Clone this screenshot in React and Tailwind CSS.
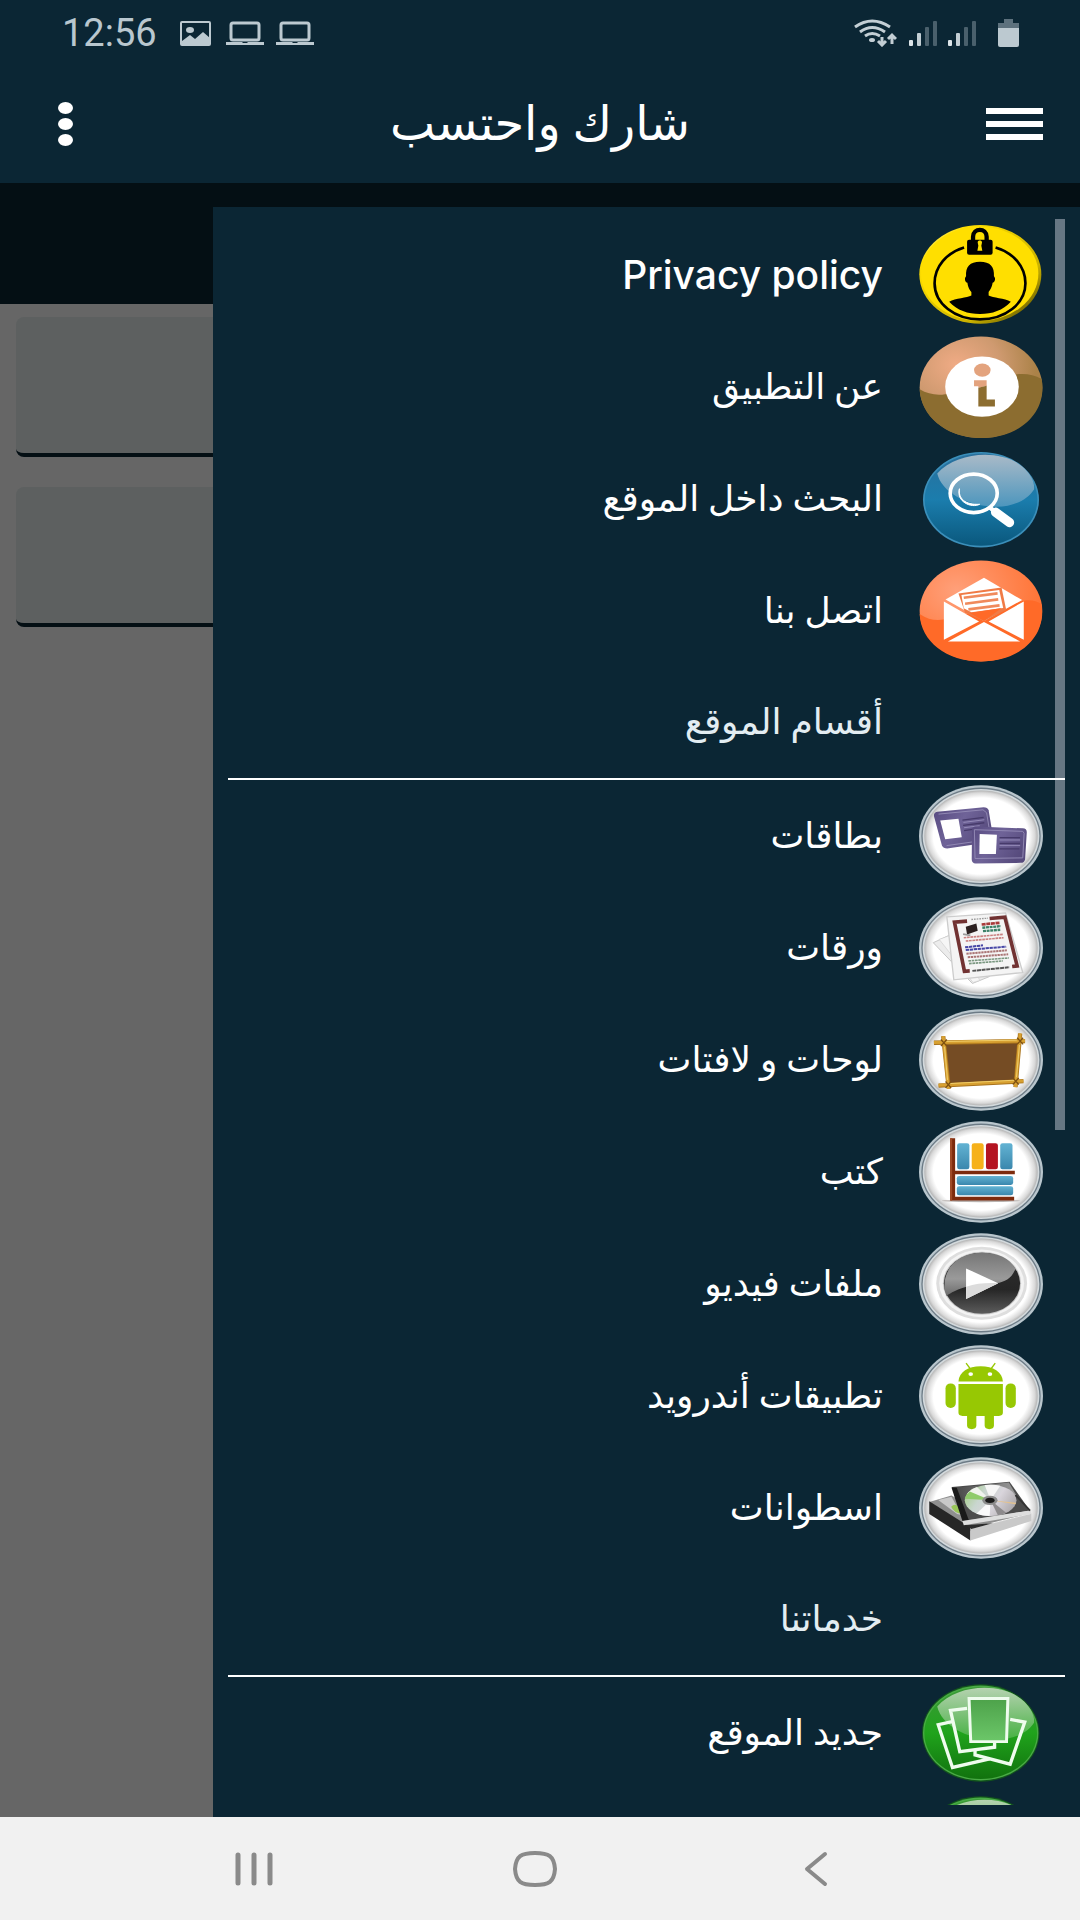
import React from "react";

const iconClass = "h-[102px] w-[124px] shrink-0";

/* Silver-rimmed white disc shared by the section icons. */
function Plate({ cy }) {
  return (
    <>
      <defs>
        <radialGradient id={`plate${cy}`}>
          <stop offset="0.84" stopColor="#ffffff" />
          <stop offset="0.95" stopColor="#d9d9d9" />
          <stop offset="1" stopColor="#b4b4b4" />
        </radialGradient>
      </defs>
      <ellipse cx="304" cy={cy} rx="187" ry="153" fill="#b9c6cd" />
      <ellipse cx="304" cy={cy} rx="180" ry="146" fill="#6c7b86" />
      <ellipse cx="304" cy={cy} rx="176" ry="142" fill="#d3d9dc" />
      <ellipse cx="304" cy={cy} rx="171" ry="137" fill={`url(#plate${cy})`} />
    </>
  );
}

function PrivacyIcon() {
  return (
    <svg className={iconClass} viewBox="117 72 374 306" aria-hidden="true">
      <defs>
        <linearGradient id="pv" x1="0" y1="0" x2="1" y2="1">
          <stop offset="0" stopColor="#fff9c0" />
          <stop offset="0.2" stopColor="#ffdf00" />
          <stop offset="0.7" stopColor="#c9b000" />
          <stop offset="1" stopColor="#3d3800" />
        </linearGradient>
      </defs>
      <ellipse cx="302" cy="223" rx="184" ry="149" fill="url(#pv)" />
      <ellipse cx="300" cy="221" rx="177" ry="142" fill="#ffdf00" />
      <path d="M253 142 C200 158 164 200 164 250 C164 312 225 359 301 359 C377 359 438 312 438 250 C438 200 402 158 348 142" fill="none" stroke="#000" strokeWidth="8" />
      <path d="M280 122 V110 C280 82 321 82 321 110 V122" fill="none" stroke="#000" strokeWidth="13" />
      <rect x="262" y="119" width="77" height="45" rx="6" />
      <path d="M294 127 C294 119 307 119 307 127 L305 137 L308 152 H293 L296 137 Z" fill="#ffdf00" />
      <path d="M301 185 C332 185 345 200 343 229 C350 236 345 248 339 248 C337 263 331 270 327 276 V287 C340 295 375 294 394 306 C370 332 338 343 301 343 C264 343 232 332 208 306 C227 294 262 295 275 287 V276 C270 270 265 263 263 248 C257 248 252 236 259 229 C257 200 270 185 301 185 Z" />
    </svg>
  );
}

function InfoIcon() {
  return (
    <svg className={iconClass} viewBox="117 408 374 306" aria-hidden="true">
      <defs>
        <radialGradient id="inf" cx="0.3" cy="0.28" r="0.65">
          <stop offset="0" stopColor="#f0ab85" />
          <stop offset="0.55" stopColor="#cf9a70" />
          <stop offset="1" stopColor="#ab8248" />
        </radialGradient>
      </defs>
      <ellipse cx="304" cy="562" rx="185" ry="153" fill="url(#inf)" />
      <path d="M119 568 C150 587 185 588 215 578 L400 525 C430 518 460 522 487 537 C505 638 421 715 304 715 C200 715 122 650 119 568 Z" fill="#8c6d30" />
      <ellipse cx="307" cy="560" rx="111" ry="91" fill="#fff" />
      <ellipse cx="308" cy="510" rx="25" ry="20" fill="#e3a37e" />
      <path d="M283 541 H321 V558 L296 563 V559 H283 Z" fill="#e3a37e" />
      <path d="M296 563 L321 557 V599 H346 V620 H296 Z" fill="#8c6d30" />
    </svg>
  );
}

function SearchIcon() {
  return (
    <svg className={iconClass} viewBox="117 54 374 306" aria-hidden="true">
      <defs>
        <linearGradient id="sb" x1="0" y1="0" x2="0" y2="1">
          <stop offset="0" stopColor="#2a6f9c" />
          <stop offset="0.5" stopColor="#1b7dad" />
          <stop offset="1" stopColor="#0a587d" />
        </linearGradient>
        <linearGradient id="sg" x1="0" y1="0" x2="0" y2="1">
          <stop offset="0" stopColor="#a9bac8" />
          <stop offset="1" stopColor="#4d96bd" />
        </linearGradient>
      </defs>
      <ellipse cx="304" cy="209" rx="175" ry="144" fill="#3b8fba" />
      <ellipse cx="304" cy="209" rx="170" ry="139" fill="url(#sb)" />
      <path d="M172 130 C235 60 375 55 435 115 C460 140 466 162 464 178 C440 215 390 232 345 230 C260 228 185 185 172 130 Z" fill="url(#sg)" />
      <ellipse cx="282" cy="190" rx="71" ry="58" fill="none" stroke="#fff" strokeWidth="11" />
      <path d="M239 176 C235 205 255 225 300 223 C275 236 228 215 239 176 Z" fill="#fff" stroke="#fff" strokeWidth="3" />
      <path d="M331 233 L341 241" stroke="#fff" strokeWidth="13" />
      <path d="M348 247 L390 278" stroke="#fff" strokeWidth="28" strokeLinecap="round" />
    </svg>
  );
}

function MailIcon() {
  return (
    <svg className={iconClass} viewBox="117 390 374 306" aria-hidden="true">
      <defs>
        <radialGradient id="ml" cx="0.3" cy="0.3" r="0.7">
          <stop offset="0" stopColor="#ffa07a" />
          <stop offset="1" stopColor="#ff7436" />
        </radialGradient>
      </defs>
      <ellipse cx="304" cy="543" rx="185" ry="152" fill="url(#ml)" />
      <path d="M119 552 C145 570 170 573 195 568 L433 512 C455 508 472 513 486 522 C503 620 421 695 304 695 C200 695 122 635 119 552 Z" fill="#ff6a28" />
      <path d="M197 508 L313 443 L428 510 L313 573 Z" fill="#fff" />
      <path d="M236 490 L366 472 L380 540 L313 573 L256 548 Z" fill="#f07b46" />
      <path d="M245 495 L359 480 L371 534 L275 547 L252 535 Z" fill="#fff" />
      <path d="M252 503 L354 490 M256 521 L356 508 M266 538 L360 526" stroke="#f08a5c" strokeWidth="8" />
      <path d="M270 549 L366 534 L313 573 Z" fill="#ff6a28" />
      <path d="M192 514 L298 575 L192 630 Z M433 514 L327 575 L433 630 Z M204 635 L313 576 L422 635 Z" fill="#fff" />
    </svg>
  );
}

function CardsIcon() {
  return (
    <svg className={iconClass} viewBox="117 75 374 306" aria-hidden="true">
      <defs>
        <linearGradient id="cd" x1="0" y1="0" x2="1" y2="0.5">
          <stop offset="0" stopColor="#574a80" />
          <stop offset="0.5" stopColor="#6f6398" />
          <stop offset="1" stopColor="#574b7d" />
        </linearGradient>
      </defs>
      <Plate cy={228} />
      <path d="M172 155 L312 141 Q324 141 327 150 L341 235 Q341 245 330 247 L202 266 Q190 266 186 256 L162 168 Q161 157 172 155 Z" fill="url(#cd)" />
      <path d="M176 162 L310 149 L321 158 L334 238 L200 257" fill="none" stroke="#9188b3" strokeWidth="3" />
      <path d="M181 181 L236 176 L246 232 L196 238 Z" fill="#fff" />
      <path d="M248 180 L312 172 M250 196 L314 188 M253 212 L300 205" stroke="#463a6a" strokeWidth="4" />
      <path d="M251 187 L314 179 M253 203 L300 197" stroke="#958bb8" strokeWidth="3" />
      <path d="M288 199 L430 205 Q443 206 442 218 L437 298 Q435 309 424 309 L288 311 Q276 310 276 298 L277 210 Q278 199 288 199 Z" fill="url(#cd)" />
      <path d="M284 209 L430 214 L434 220 L430 294 L286 296 Z" fill="none" stroke="#9188b3" strokeWidth="3" />
      <path d="M300 222 L352 224 L349 282 L299 282 Z" fill="#fff" />
      <path d="M360 233 H422 M360 250 H422 M359 267 H420" stroke="#463a6a" strokeWidth="4" />
      <path d="M360 240 H422 M360 257 H422" stroke="#958bb8" strokeWidth="3" />
    </svg>
  );
}

function PapersIcon() {
  return (
    <svg className={iconClass} viewBox="117 411 374 306" aria-hidden="true">
      <Plate cy={564} />
      <path d="M160 548 L212 524 L330 650 L278 671 Z" fill="#ececec" stroke="#c6c6c6" strokeWidth="3" />
      <path d="M178 538 L240 515 L300 662 L280 668 Z" fill="#f6f6f6" stroke="#cfcfcf" strokeWidth="2" />
      <path d="M201 470 L378 458 L430 638 L222 660 Z" fill="#f4f4f4" stroke="#cdcdcd" strokeWidth="4" />
      <path d="M262 483 L224 486 L254 634 L270 633 M330 475 L376 471 L413 618 L398 620" fill="none" stroke="#713232" strokeWidth="11" />
      <path d="M275 478 L325 474" stroke="#9a9a9a" strokeWidth="4" strokeDasharray="5 3" />
      <path d="M258 500 L290 490 L294 512 L262 523 Z" fill="#2b2020" />
      <path d="M250 522 L272 526" stroke="#999" strokeWidth="5" />
      <path d="M306 493 L360 488" stroke="#a83a3a" strokeWidth="8" strokeDasharray="12 2" />
      <path d="M308 503 L364 498 M310 513 L362 509" stroke="#3c8068" strokeWidth="7" strokeDasharray="9 2" />
      <path d="M252 533 L370 523 M258 543 L372 533" stroke="#c98080" strokeWidth="5" strokeDasharray="8 2" />
      <path d="M256 562 L310 556 M258 570 L380 560" stroke="#4747a6" strokeWidth="6" strokeDasharray="10 2" />
      <path d="M260 581 L382 571 M264 592 L386 583" stroke="#a97474" strokeWidth="6" strokeDasharray="7 2" />
      <path d="M266 603 L388 594 M268 611 L370 603" stroke="#7a9780" strokeWidth="5" strokeDasharray="8 2" />
      <path d="M278 633 L390 622" stroke="#555" strokeWidth="6" strokeDasharray="12 2" />
    </svg>
  );
}

function BoardIcon() {
  return (
    <svg className={iconClass} viewBox="117 57 374 306" aria-hidden="true">
      <Plate cy={210} />
      <path d="M195 158 L422 152 L412 276 L208 284 Z" fill="#754c24" />
      <g stroke="#a8721c" strokeWidth="13" fill="none">
        <path d="M162 158 L437 153 M176 287 L432 274 M190 138 L207 297 M422 130 L408 292" />
      </g>
      <g stroke="#d7a031" strokeWidth="9" fill="none">
        <path d="M162 157 L437 152 M176 286 L432 273 M190 138 L206 297 M422 130 L408 292" />
      </g>
      <path d="M200 154 L412 150 M210 281 L405 271 M194 170 L203 270 M420 165 L411 262" stroke="#f1cf6b" strokeWidth="3" />
      <g stroke="#7d5010" strokeWidth="4">
        <path d="M183 148 L201 168 M201 148 L183 168 M413 143 L431 163 M431 143 L413 163 M197 275 L214 294 M214 275 L197 294 M400 264 L418 284 M418 264 L400 284" />
      </g>
    </svg>
  );
}

function BooksIcon() {
  return (
    <svg className={iconClass} viewBox="117 393 374 306" aria-hidden="true">
      <defs>
        <linearGradient id="bk" x1="0" y1="0" x2="0" y2="1">
          <stop offset="0" stopColor="#63b3d3" />
          <stop offset="1" stopColor="#3a87ad" />
        </linearGradient>
      </defs>
      <Plate cy={546} />
      <ellipse cx="304" cy="633" rx="118" ry="4" fill="#b9b3b0" />
      <path d="M211 444 H226 V542 H406 V553 H226 V621 H404 V632 H211 Z" fill="#7d2b0d" />
      <path d="M211 444 H217 V632 H211 Z" fill="#a04a26" />
      <rect x="232" y="459" width="37" height="79" rx="7" fill="url(#bk)" />
      <rect x="276" y="459" width="36" height="79" rx="7" fill="#f6b11a" />
      <rect x="319" y="459" width="36" height="79" rx="7" fill="#b41421" />
      <rect x="362" y="459" width="37" height="79" rx="7" fill="url(#bk)" />
      <rect x="231" y="558" width="170" height="27" rx="7" fill="url(#bk)" />
      <rect x="231" y="589" width="170" height="27" rx="7" fill="url(#bk)" />
    </svg>
  );
}

function VideoIcon() {
  return (
    <svg className={iconClass} viewBox="117 39 374 306" aria-hidden="true">
      <defs>
        <linearGradient id="vb" x1="0" y1="0" x2="0" y2="1">
          <stop offset="0" stopColor="#2e2e2e" />
          <stop offset="0.6" stopColor="#262626" />
          <stop offset="1" stopColor="#5c5c5c" />
        </linearGradient>
        <linearGradient id="vg" x1="0" y1="0" x2="0" y2="1">
          <stop offset="0" stopColor="#767676" />
          <stop offset="0.6" stopColor="#9a9a9a" />
          <stop offset="1" stopColor="#6b6b6b" />
        </linearGradient>
      </defs>
      <Plate cy={192} />
      <ellipse cx="306" cy="190" rx="137" ry="110" fill="#dedede" />
      <ellipse cx="306" cy="190" rx="128" ry="102" fill="#f3f3f3" />
      <ellipse cx="307" cy="190" rx="118" ry="95" fill="#c9c9c9" />
      <ellipse cx="307" cy="190" rx="115" ry="92" fill="url(#vb)" />
      <path d="M194 210 C188 140 240 98 307 98 C355 98 390 115 408 146 C385 205 330 185 270 198 C235 206 210 220 200 228 Z" fill="url(#vg)" />
      <path d="M259 145 L356 190 L259 237 Z" fill="#fff" />
      <path d="M259 200 C290 190 325 188 356 190 L259 237 Z" fill="#dcdcdc" />
    </svg>
  );
}

function AndroidIcon() {
  return (
    <svg className={iconClass} viewBox="117 375 374 306" aria-hidden="true">
      <Plate cy={528} />
      <g fill="#97c803">
        <path d="M236 484 C238 455 265 438 303 438 C341 438 368 455 370 484 Z" />
        <path d="M236 492 H370 V578 Q370 588 358 588 H343 V618 Q342 628 329 628 Q316 628 315 618 V588 H290 V618 Q289 628 276 628 Q263 628 262 618 V588 H248 Q236 588 236 578 Z" />
        <rect x="197" y="490" width="31" height="74" rx="15" />
        <rect x="378" y="490" width="31" height="74" rx="15" />
      </g>
      <path d="M259 429 L271 445 M347 429 L335 445" stroke="#97c803" strokeWidth="4" />
      <ellipse cx="273" cy="462" rx="7" ry="6" fill="#fff" />
      <ellipse cx="331" cy="462" rx="7" ry="6" fill="#fff" />
    </svg>
  );
}

function DiscsIcon() {
  return (
    <svg className={iconClass} viewBox="117 51 374 306" aria-hidden="true">
      <defs>
        <linearGradient id="dc" x1="0" y1="0.3" x2="1" y2="0.7">
          <stop offset="0" stopColor="#a9cf8e" />
          <stop offset="0.3" stopColor="#c9d6cf" />
          <stop offset="0.6" stopColor="#d9d5dc" />
          <stop offset="1" stopColor="#aaa6a8" />
        </linearGradient>
        <linearGradient id="cv" x1="0" y1="0" x2="1" y2="0">
          <stop offset="0" stopColor="#4a4a4a" />
          <stop offset="1" stopColor="#9a9a9a" />
        </linearGradient>
      </defs>
      <Plate cy={204} />
      <path d="M148 186 L215 166 L300 215 L455 222 L275 275 Z" fill="#8f8f8f" />
      <path d="M175 180 L215 170 L245 225 L232 222 Z" fill="#c9c9c9" />
      <path d="M214 200 Q225 188 236 200 L245 222 Q222 218 214 200 Z" fill="#9ac65a" />
      <path d="M148 184 L272 262 V302 L148 222 Z" fill="#262626" />
      <path d="M272 266 L456 220 V243 L272 302 Z" fill="#c9c9c9" />
      <path d="M272 266 L456 220" stroke="#eee" strokeWidth="3" />
      <path d="M255 256 L340 250 L275 267 Z" fill="#2b2b2b" />
      <path d="M216 141 L390 125 L452 212 L250 243 Z" fill="#4c4c4c" />
      <path d="M230 143 L388 127 L410 165 L260 190 Z" fill="url(#cv)" />
      <path d="M215 142 L231 143 L267 240 L248 243 Z" fill="#191919" />
      <ellipse cx="333" cy="181" rx="78" ry="47" fill="url(#dc)" />
      <path d="M333 181 L262 161 A78 47 0 0 1 292 141 Z" fill="#f0f3ee" />
      <path d="M333 181 L255 176 A78 47 0 0 1 270 154 Z" fill="#8fcb6b" />
      <path d="M333 181 L315 135 A78 47 0 0 1 362 137 Z" fill="#f7f7f7" />
      <path d="M333 181 L290 221 A78 47 0 0 0 330 228 Z" fill="#fafafa" />
      <path d="M333 181 L355 226 A78 47 0 0 0 380 218 Z" fill="#8d8a8c" />
      <path d="M333 181 L410 188 L408 193 Z" fill="#e5c38d" />
      <ellipse cx="331" cy="181" rx="23" ry="14" fill="#8b8b8b" />
      <ellipse cx="331" cy="181" rx="14" ry="8" fill="#1b1b1b" />
      <path d="M248 243 L455 211 L456 222 L252 256 Z" fill="#dedede" />
      <path d="M408 165 L452 212" stroke="#333" strokeWidth="5" />
    </svg>
  );
}

function PhotosIcon({ id }) {
  return (
    <svg className={iconClass} viewBox="117 93 374 306" aria-hidden="true">
      <defs>
        <linearGradient id={`${id}b`} x1="0" y1="0" x2="0" y2="1">
          <stop offset="0" stopColor="#3c9a38" />
          <stop offset="0.5" stopColor="#20a31c" />
          <stop offset="1" stopColor="#11720e" />
        </linearGradient>
        <linearGradient id={`${id}g`} x1="0" y1="0" x2="0" y2="1">
          <stop offset="0" stopColor="#b5d2b0" />
          <stop offset="1" stopColor="#46b142" />
        </linearGradient>
        <linearGradient id={`${id}p`} x1="0" y1="0" x2="0" y2="1">
          <stop offset="0" stopColor="#4da24a" />
          <stop offset="1" stopColor="#6cc769" />
        </linearGradient>
      </defs>
      <ellipse cx="303" cy="246" rx="177" ry="147" fill="#12541c" />
      <ellipse cx="303" cy="246" rx="174" ry="143" fill="#49ab45" />
      <ellipse cx="303" cy="246" rx="170" ry="139" fill={`url(#${id}b)`} />
      <path d="M172 166 C235 95 375 92 435 152 C458 176 466 198 464 215 C440 252 390 268 345 266 C260 265 185 222 172 166 Z" fill={`url(#${id}g)`} />
      <g stroke="#effcee" strokeWidth="10" fill="none">
        <path d="M217 212 L175 221 L218 350 L330 324" />
        <path d="M392 205 L436 213 L392 340 L286 312 V300" />
        <path d="M262 172 L212 178 L240 302 L345 289 V276" />
      </g>
      <path d="M268 142 H385 L381 272 H273 Z" fill={`url(#${id}p)`} stroke="#effcee" strokeWidth="9" />
    </svg>
  );
}

const items = [
  { label: "Privacy policy", Icon: PrivacyIcon, latin: true },
  { label: "عن التطبيق", Icon: InfoIcon },
  { label: "البحث داخل الموقع", Icon: SearchIcon },
  { label: "اتصل بنا", Icon: MailIcon },
  { label: "أقسام الموقع" },
  { label: "بطاقات", Icon: CardsIcon },
  { label: "ورقات", Icon: PapersIcon },
  { label: "لوحات و لافتات", Icon: BoardIcon },
  { label: "كتب", Icon: BooksIcon },
  { label: "ملفات فيديو", Icon: VideoIcon },
  { label: "تطبيقات أندرويد", Icon: AndroidIcon },
  { label: "اسطوانات", Icon: DiscsIcon },
  { label: "خدماتنا" },
  { label: "جديد الموقع", Icon: PhotosIcon },
];

function Laptop() {
  return (
    <svg className="h-6 w-[38px]" viewBox="0 0 38 24" aria-hidden="true">
      <rect x="5" y="2" width="28" height="17" rx="2" fill="none" stroke="#bcc9d0" strokeWidth="3" />
      <path d="M0 21 H16 L17 22 H21 L22 21 H38 V24 H0 Z" fill="#bcc9d0" />
    </svg>
  );
}

function Signal() {
  return (
    <svg className="h-[26px] w-7" viewBox="0 0 28 26" aria-hidden="true">
      <rect x="0" y="20" width="4" height="6" rx="1" fill="#dde5e9" />
      <rect x="8" y="13" width="4" height="13" rx="1" fill="#c3ced4" />
      <rect x="16" y="7" width="4" height="19" rx="1" fill="#4a606c" />
      <rect x="24" y="1" width="4" height="25" rx="1" fill="#4a606c" />
    </svg>
  );
}

function StatusBar() {
  return (
    <div className="flex h-[66px] items-center justify-between pl-[62px] pr-[61px]">
      <div className="flex items-center">
        <span className="w-[118px] text-[38px] leading-[44px] text-[#b9c7cf]">12:56</span>
        <svg className="mr-[15px] h-[25px] w-[31px]" viewBox="0 0 31 25" aria-hidden="true">
          <rect x="1" y="1" width="29" height="23" rx="1" fill="none" stroke="#bcc9d0" strokeWidth="2" />
          <ellipse cx="10" cy="9" rx="4" ry="3" fill="#bcc9d0" />
          <path d="M2 20 L10 14 L15 18 L23 11 L30 17 V24 H2 Z" fill="#bcc9d0" />
        </svg>
        <div className="flex gap-3">
          <Laptop />
          <Laptop />
        </div>
      </div>
      <div className="flex items-center">
        <svg className="mr-3 h-7 w-[43px]" viewBox="0 0 43 28" fill="none" stroke="#c3ced4" strokeWidth="3" aria-hidden="true">
          <path d="M1 8 Q18 -4 36 8 M6 13 Q18 4 31 13 M11 17 Q18 12 26 17" />
          <ellipse cx="18" cy="21" rx="3" ry="2" fill="#c3ced4" stroke="none" />
          <path d="M28 18 V26 M24 22 L28 26 L32 22 M38 25 V17 M34 20 L38 16 L42 20" strokeWidth="3" />
        </svg>
        <Signal />
        <span className="w-[11px]" />
        <Signal />
        <svg className="ml-[22px] h-7 w-[21px]" viewBox="0 0 21 28" aria-hidden="true">
          <path d="M6 0 H15 V4 H21 V10 H0 V4 H6 Z" fill="#5d717d" />
          <path d="M0 9 H21 V26 Q21 28 19 28 H2 Q0 28 0 26 Z" fill="#bcc9d0" />
        </svg>
      </div>
    </div>
  );
}

export default function App() {
  return (
    <div className="flex h-screen flex-col overflow-hidden bg-white font-['Roboto','DejaVu_Sans',sans-serif]">
      <header className="shrink-0 bg-[#0b2634] text-white">
        <StatusBar />
        <div className="grid h-[117px] grid-cols-[1fr_auto_1fr] items-center px-[37px] pb-0.5">
          <button type="button" aria-label="خيارات" className="flex w-[57px] justify-center justify-self-start">
            <svg className="h-11 w-[15px]" viewBox="0 0 15 44" fill="#fff" aria-hidden="true">
              <ellipse cx="7.5" cy="6" rx="7.5" ry="6" />
              <ellipse cx="7.5" cy="22" rx="7.5" ry="6" />
              <ellipse cx="7.5" cy="38" rx="7.5" ry="6" />
            </svg>
          </button>
          <h1 dir="rtl" className="text-[48px] leading-[56px]">شارك واحتسب</h1>
          <button type="button" aria-label="القائمة" className="flex w-[57px] flex-col gap-[7px] justify-self-end">
            <span className="h-1.5 w-full bg-white" />
            <span className="h-1.5 w-full bg-white" />
            <span className="h-1.5 w-full bg-white" />
          </button>
        </div>
      </header>

      <main className="grid min-h-0 flex-1 grid-cols-1 grid-rows-1">
        <div className="col-start-1 row-start-1">
          <div className="h-[121px] bg-[#0b2634]" />
          <div className="flex flex-col gap-[30px] px-4 pt-[13px]">
            <div className="h-[140px] rounded-lg border-b-4 border-[#0b2634] bg-[#e8f0f0]" />
            <div className="h-[140px] rounded-lg border-b-4 border-[#0b2634] bg-[#e8f0f0]" />
          </div>
        </div>

        <div className="col-start-1 row-start-1 flex min-h-0 justify-end bg-black/60 pt-6">
          <nav dir="rtl" className="flex min-h-0 w-[867px] max-w-full bg-[#0b2634] px-[15px] py-3">
            <div className="relative min-h-0 flex-1 overflow-hidden">
              <div className="absolute right-0 top-0 h-[911px] w-2.5 bg-[#677784]" />
              <ul className="relative text-[36px] leading-[44px] text-white">
                {items.map(({ label, Icon, latin }) =>
                  Icon ? (
                    <li key={label}>
                      <a href="#" className="flex h-28 items-center gap-9 pr-[22px]">
                        <Icon id="photos" />
                        <span className={latin ? "font-['Inter'] text-[39px] font-medium" : ""}>{label}</span>
                      </a>
                    </li>
                  ) : (
                    <li key={label} className="flex h-[113px] items-center border-b-2 border-white pb-0.5 pr-[182px] text-[#e3edf2]">
                      {label}
                    </li>
                  )
                )}
                <li className="flex h-28 items-center pr-[22px]">
                  <PhotosIcon id="next" />
                </li>
              </ul>
            </div>
          </nav>
        </div>
      </main>

      <div className="grid h-[103px] shrink-0 grid-cols-3 place-items-center bg-[#f1f1f1] pl-[113px] pr-[123px]">
        <button type="button" aria-label="Recents">
          <svg className="h-9 w-10" viewBox="0 0 40 36" stroke="#8a8a8a" strokeWidth="5" strokeLinecap="round" aria-hidden="true">
            <path d="M4 4 V32 M20 4 V32 M36 4 V32" />
          </svg>
        </button>
        <button type="button" aria-label="Home">
          <svg className="h-9 w-11" viewBox="0 0 44 36" fill="none" stroke="#8a8a8a" strokeWidth="4" aria-hidden="true">
            <path d="M22 2 C36 2 41 5 42 18 C41 31 36 34 22 34 C8 34 3 31 2 18 C3 5 8 2 22 2 Z" />
          </svg>
        </button>
        <button type="button" aria-label="Back">
          <svg className="h-9 w-6" viewBox="0 0 24 36" fill="none" stroke="#8a8a8a" strokeWidth="4" strokeLinecap="round" strokeLinejoin="round" aria-hidden="true">
            <path d="M21 3 L3 18 L21 33" />
          </svg>
        </button>
      </div>
    </div>
  );
}
